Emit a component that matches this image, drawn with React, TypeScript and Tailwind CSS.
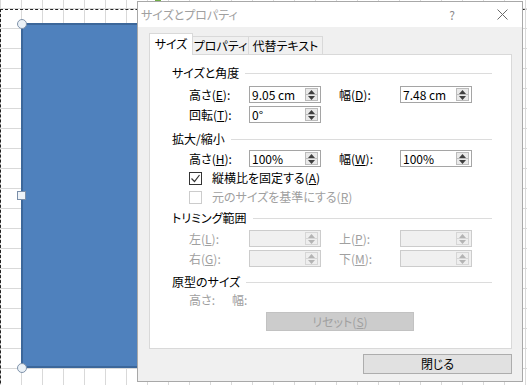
import React from "react";

const Tri = ({ up, color }: { up: boolean; color: string }) => (
  <svg width="7" height="4" viewBox="0 0 7 4">
    <polygon points={up ? "0,4 7,4 3.5,0" : "0,0 7,0 3.5,4"} fill={color} />
  </svg>
);

function Spin({ disabled }: { disabled?: boolean }) {
  const c = disabled ? "#b4b4b4" : "#404040";
  return (
    <div
      className={`w-[13px] my-[1px] mr-[2px] flex flex-col border ${
        disabled ? "border-[#d6d6d6] bg-[#eeeeee]" : "border-[#bcbcbc] bg-[#e9e9e9]"
      }`}
    >
      <div className="flex-1 flex items-center justify-center">
        <Tri up color={c} />
      </div>
      <div className={`h-px ${disabled ? "bg-[#d6d6d6]" : "bg-[#bcbcbc]"}`} />
      <div className="flex-1 flex items-center justify-center">
        <Tri up={false} color={c} />
      </div>
    </div>
  );
}

function Field({ value = "", disabled }: { value?: string; disabled?: boolean }) {
  return (
    <div
      className={`w-[72px] h-[17px] border flex ${
        disabled ? "border-[#cccccc] bg-[#f0f0f0]" : "border-[#a5a5a5] bg-white"
      }`}
    >
      <span className="flex-1 pl-[2px] leading-[15px] text-black whitespace-nowrap">{value}</span>
      <Spin disabled={disabled} />
    </div>
  );
}

function Heading({ children }: { children: React.ReactNode }) {
  return (
    <div className="flex items-center h-[16px] gap-[6px]">
      <span className="whitespace-nowrap">{children}</span>
      <div className="flex-1 h-px bg-[#dcdcdc]" />
    </div>
  );
}

function Row({
  l1,
  v1,
  l2,
  v2,
  disabled,
  className = "",
}: {
  l1: React.ReactNode;
  v1?: string;
  l2?: React.ReactNode;
  v2?: string;
  disabled?: boolean;
  className?: string;
}) {
  const tc = disabled ? "text-[#a0a0a0]" : "text-black";
  return (
    <div className={`flex items-center h-[17px] pl-[17px] ${className}`}>
      <span className={`w-[60px] whitespace-nowrap ${tc}`}>{l1}</span>
      <Field value={v1} disabled={disabled} />
      {l2 !== undefined && (
        <>
          <span className={`ml-[18px] w-[61px] whitespace-nowrap ${tc}`}>{l2}</span>
          <Field value={v2} disabled={disabled} />
        </>
      )}
    </div>
  );
}

export default function App() {
  return (
    <div className="relative w-[527px] h-[385px] overflow-hidden bg-white font-['Noto_Sans_CJK_JP','Noto_Sans',sans-serif] [font-feature-settings:'palt'] text-[12px] leading-none bg-[linear-gradient(to_right,#d9d9d9_1px,transparent_1px),linear-gradient(to_bottom,#d9d9d9_1px,transparent_1px)] bg-[size:21px_20px] bg-[position:0_8px]">
      {/* selection dashed frame */}
      <div className="absolute left-0 top-[9px] w-[600px] h-[500px] border-l border-t border-dashed border-[#222]" />
      {/* rotation handle hint */}
      <div className="absolute left-[155px] top-0 w-[6px] h-[3px] bg-[#70ad47]" />
      {/* blue shape */}
      <div className="absolute left-[21px] top-[23px] w-[220px] h-[345px] bg-[#4f81bd] border-2 border-[#3c679a]" />
      {/* handles */}
      <div className="absolute left-[17px] top-[19px] w-[10px] h-[10px] rounded-full border border-[#8093aa] bg-[#eaf1f7]" />
      <div className="absolute left-[17px] top-[191px] w-[9px] h-[9px] border border-[#7a8ea8] bg-[#eef3f8]" />
      <div className="absolute left-[17px] top-[363px] w-[10px] h-[10px] rounded-full border border-[#8093aa] bg-[#eaf1f7]" />

      {/* dialog */}
      <div className="absolute left-[137px] top-[1px] w-[386px] h-[381px] border border-[#a8a8a8] bg-[#f0f0f0] flex flex-col">
        {/* title bar */}
        <div className="h-[25px] bg-white flex items-center pl-[3px] shrink-0">
          <span className="text-[#a0a0a0] text-[12px]">サイズとプロパティ</span>
          <span className="ml-auto mr-[42px] text-[#8a8a8a] text-[12px]">?</span>
          <svg width="11" height="11" viewBox="0 0 11 11" className="mr-[14px]">
            <path d="M0.5 0.5 L10.5 10.5 M10.5 0.5 L0.5 10.5" stroke="#6a6a6a" strokeWidth="1" />
          </svg>
        </div>

        {/* tabs */}
        <div className="mt-[6px] pl-[11px] flex items-end h-[22px] shrink-0">
          <div className="relative z-10 h-[22px] w-[44px] bg-white border border-b-0 border-[#d9d9d9] flex items-center justify-center pb-[1px] whitespace-nowrap">
            サイズ
          </div>
          <div className="h-[18px] mb-[1px] w-[56px] bg-[#f0f0f0] border border-b-0 border-l-0 border-[#d9d9d9] flex items-center justify-center whitespace-nowrap">
            プロパティ
          </div>
          <div className="h-[18px] mb-[1px] w-[74px] bg-[#f0f0f0] border border-b-0 border-l-0 border-[#d9d9d9] flex items-center justify-center whitespace-nowrap">
            代替テキスト
          </div>
        </div>

        {/* panel */}
        <div className="ml-[11px] mt-[-1px] w-[363px] h-[295px] bg-white border border-[#d9d9d9] shrink-0">
          <div className="pl-[22px] pr-[19px] flex flex-col">
            <div className="mt-[10px]">
              <Heading>サイズと角度</Heading>
            </div>
            <Row
              className="mt-[5px]"
              l1={<>高さ(<u>E</u>):</>}
              v1="9.05 cm"
              l2={<>幅(<u>D</u>):</>}
              v2="7.48 cm"
            />
            <Row className="mt-[3px]" l1={<>回転(<u>T</u>):</>} v1="0°" />
            <div className="mt-[8px]">
              <Heading>拡大/縮小</Heading>
            </div>
            <Row
              className="mt-[3px]"
              l1={<>高さ(<u>H</u>):</>}
              v1="100%"
              l2={<>幅(<u>W</u>):</>}
              v2="100%"
            />
            <div className="mt-[3px] h-[16px] pl-[17px] flex items-center">
              <div className="w-[13px] h-[13px] border border-[#333333] bg-white flex items-center justify-center">
                <svg width="11" height="11" viewBox="0 0 11 11">
                  <path d="M1.5 5.5 L4.5 8.5 L9.5 2" stroke="#333333" strokeWidth="1.2" fill="none" />
                </svg>
              </div>
              <span className="ml-[10px] whitespace-nowrap">
                縦横比を固定する(<u>A</u>)
              </span>
            </div>
            <div className="mt-[3px] h-[16px] pl-[17px] flex items-center">
              <div className="w-[13px] h-[13px] border border-[#cccccc] bg-white" />
              <span className="ml-[10px] text-[#a0a0a0] whitespace-nowrap">
                元のサイズを基準にする(<u>R</u>)
              </span>
            </div>
            <div className="mt-[5px]">
              <Heading>トリミング範囲</Heading>
            </div>
            <Row
              className="mt-[4px]"
              disabled
              l1={<>左(<u>L</u>):</>}
              l2={<>上(<u>P</u>):</>}
            />
            <Row
              className="mt-[3px]"
              disabled
              l1={<>右(<u>G</u>):</>}
              l2={<>下(<u>M</u>):</>}
            />
            <div className="mt-[7px]">
              <Heading>原型のサイズ</Heading>
            </div>
            <div className="mt-[2px] h-[16px] pl-[17px] flex items-center text-[#a0a0a0]">
              <span className="w-[43px]">高さ:</span>
              <span>幅:</span>
            </div>
            <div className="mt-[4px] ml-[94px] w-[148px] h-[19px] bg-[#cccccc] border border-[#c2c2c2] flex items-center justify-center text-[#a0a0a0] whitespace-nowrap">
              リセット(<u>S</u>)
            </div>
          </div>
        </div>

        {/* bottom button */}
        <div className="mt-[5px] self-end mr-[10px] w-[149px] h-[20px] bg-[#e1e1e1] border border-[#adadad] flex items-center justify-center">
          閉じる
        </div>
      </div>
    </div>
  );
}
